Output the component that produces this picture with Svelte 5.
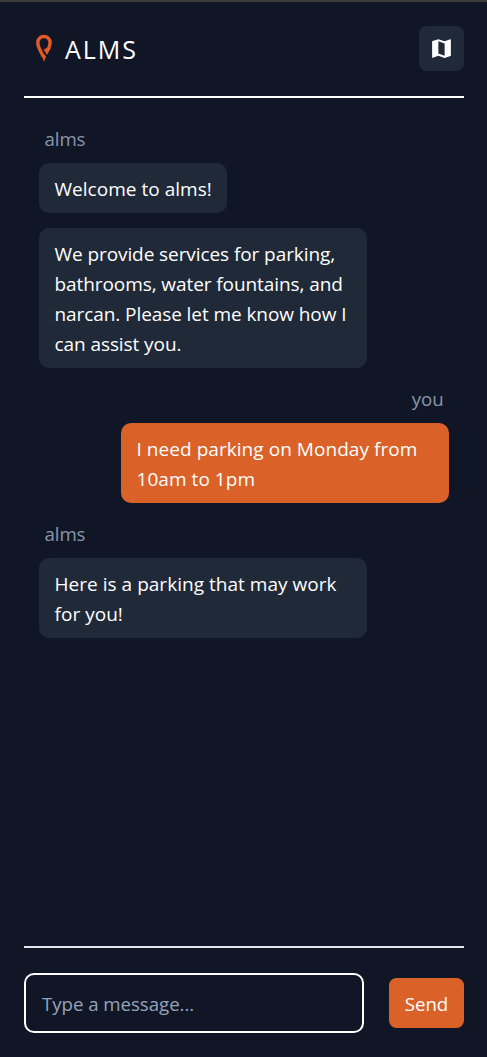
<script>
  const groups = [
    { from: 'alms', messages: ['Welcome to alms!', 'We provide services for parking, bathrooms, water fountains, and narcan. Please let me know how I can assist you.'] },
    { from: 'you', messages: ['I need parking on Monday from 10am to 1pm'] },
    { from: 'alms', messages: ['Here is a parking that may work for you!'] }
  ];
  let draft = $state('');
</script>

<main class="app">
  <header>
    <div class="brand">
      <svg class="pin" viewBox="0 0 16 28" width="16" height="28" aria-hidden="true">
        <path d="M7.2 22.5 L3.3 14.5 C2.3 12.3 1.8 10.6 1.8 8.9 C1.8 5 4.4 2.5 7.9 2.5 C11.4 2.5 14.1 5 14.1 8.7 C14.1 11 13.3 13.3 12 15.8" />
        <path class="tip" d="M7.5 15.3 C9.3 15.1 10.7 14.2 11.6 12.8 L14.8 13.9 L11 21 Z M5.2 20.5 L8.2 20 L10 22.8 L8 27.8 Z" />
      </svg>
      <h1>ALMS</h1>
    </div>
    <button class="map" aria-label="Map">
      <svg viewBox="0 0 24 24" width="25" height="25" aria-hidden="true">
        <path d="M20.5 3l-.16.03L15 5.1 9 3 3.36 4.9c-.21.07-.36.25-.36.48V20.5c0 .28.22.5.5.5l.16-.03L9 18.9l6 2.1 5.64-1.9c.21-.07.36-.25.36-.48V3.5c0-.28-.22-.5-.5-.5zM15 19l-6-2.11V5l6 2.11V19z" />
      </svg>
    </button>
  </header>

  <section class="chat">
    {#each groups as group}
      <div class="group" class:mine={group.from === 'you'}>
        <span class="author">{group.from}</span>
        <div class="messages">
          {#each group.messages as message}
            <p class:long={message.length > 60}>{message}</p>
          {/each}
        </div>
      </div>
    {/each}
  </section>

  <form onsubmit={(e) => e.preventDefault()}>
    <input bind:value={draft} placeholder="Type a message..." aria-label="Message" />
    <button class="send">Send</button>
  </form>
</main>

<style>
  :global(body) { background: #111627; }
  .app {
    box-sizing: border-box;
    height: 1057px;
    padding: 0 23px 0 24px;
    border-top: 2px solid #3b3b3b;
    display: flex;
    flex-direction: column;
    background: #111627;
    color: #fff;
    font-family: "Open Sans", "Noto Sans", sans-serif;
    font-size: 18.7px;
    line-height: 30px;
  }
  header {
    box-sizing: border-box;
    height: 96px;
    display: flex;
    justify-content: space-between;
    align-items: flex-start;
    padding-top: 24px;
    border-bottom: 2px solid #fff;
  }
  .brand { display: flex; align-items: center; gap: 13px; height: 45px; padding-left: 12px; }
  .pin { margin-top: -1px; fill: none; stroke: #e25b24; stroke-width: 3.4; }
  .tip { fill: #e25b24; stroke: none; }
  h1 { margin: 0; font-size: 25px; line-height: 36px; font-weight: 400; letter-spacing: 2px; }
  button { border: 0; padding: 0; color: #fff; font: inherit; border-radius: 7.5px; }
  .map { width: 45px; height: 45px; display: grid; place-items: center; background: #202938; }
  .map svg { fill: #fff; }
  .chat { flex: 1; padding: 26px 15px 0; display: flex; flex-direction: column; gap: 16px; }
  .group { display: flex; flex-direction: column; align-items: flex-start; gap: 9px; }
  .mine { align-items: flex-end; }
  .author { padding: 0 5.5px; color: #8796aa; letter-spacing: -0.1px; }
  .messages { display: flex; flex-direction: column; align-items: inherit; gap: 15px; }
  p {
    box-sizing: border-box;
    max-width: 328px;
    margin: 0;
    padding: 11px 15px 9px 15.5px;
    border-radius: 10px;
    background: #202938;
    font-size: 19px;
    letter-spacing: 0.03px;
  }
  .long { letter-spacing: -0.08px; }
  .mine p { background: #da6228; letter-spacing: 0.05px; }
  form {
    box-sizing: border-box;
    height: 111px;
    display: flex;
    align-items: center;
    gap: 25px;
    padding-top: 1px;
    border-top: 2px solid #e5e7eb;
  }
  input {
    box-sizing: border-box;
    flex: 1;
    min-width: 0;
    height: 60px;
    padding: 0 15px 0 16px;
    border: 2px solid #fff;
    border-radius: 10px;
    background: transparent;
    color: #fff;
    font: inherit;
    letter-spacing: -0.05px;
  }
  input::placeholder { color: #94a3b8; opacity: 1; }
  .send { width: 75px; height: 50px; padding-top: 1px; background: #da6228; }
</style>
